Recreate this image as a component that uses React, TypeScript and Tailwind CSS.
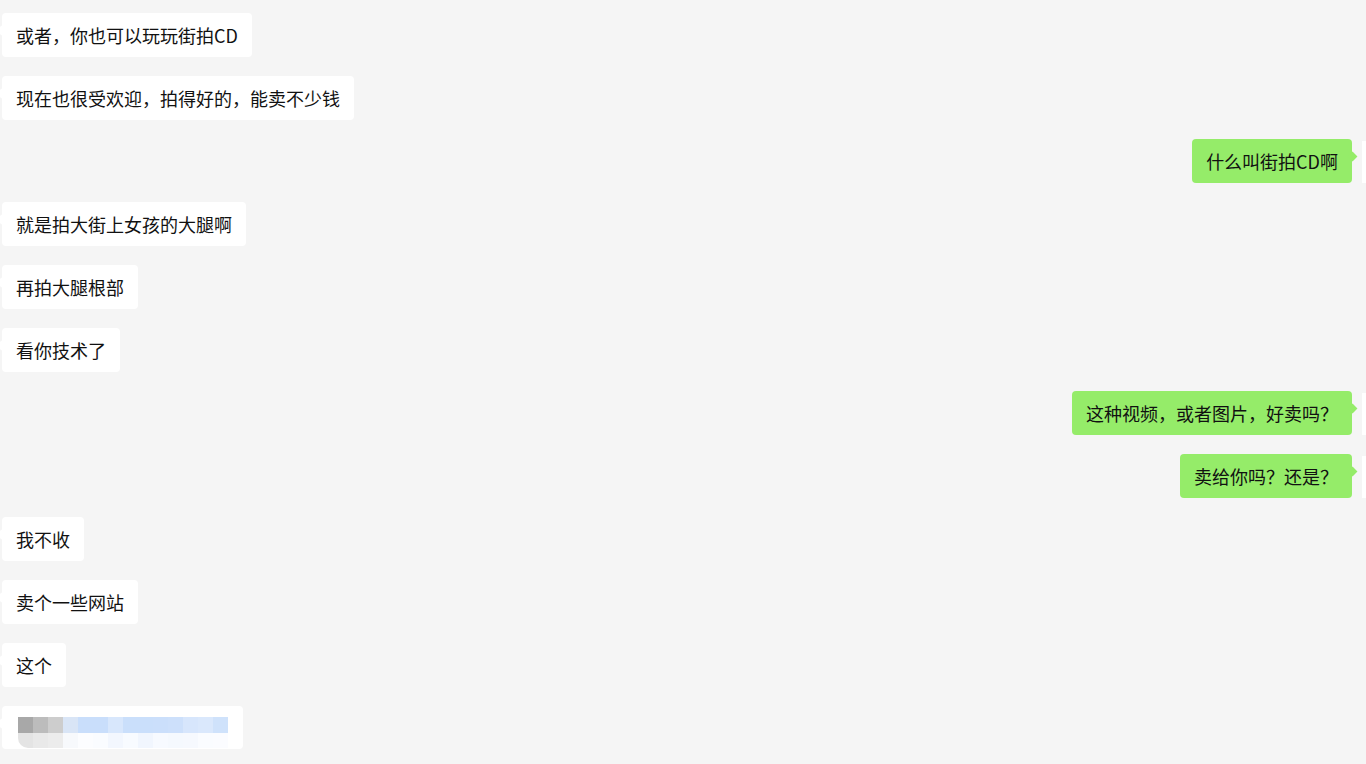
type Msg = { side: "left" | "right"; text: string };

const messages: Msg[] = [
  { side: "left", text: "或者，你也可以玩玩街拍CD" },
  { side: "left", text: "现在也很受欢迎，拍得好的，能卖不少钱" },
  { side: "right", text: "什么叫街拍CD啊" },
  { side: "left", text: "就是拍大街上女孩的大腿啊" },
  { side: "left", text: "再拍大腿根部" },
  { side: "left", text: "看你技术了" },
  { side: "right", text: "这种视频，或者图片，好卖吗？" },
  { side: "right", text: "卖给你吗？还是？" },
  { side: "left", text: "我不收" },
  { side: "left", text: "卖个一些网站" },
  { side: "left", text: "这个" },
];

// pixelated (blurred) last message
const mosaicTop = [
  "#a8a8a8", "#bcbcbc", "#cdcdcd", "#d9e5f6", "#c9defb", "#c9defb", "#d8e7fc",
  "#cadffb", "#cadffb", "#cbdffb", "#cde0fb", "#d7e6fc", "#dae8fc", "#cfe2fb",
];
const mosaicBottom = [
  "#e4e4e4", "#e9e9e9", "#ececec", "#f7f9fc", "#fcfdff", "#fafcff", "#f3f7fe",
  "#f8fbff", "#f1f6fe", "#f7faff", "#f5f9fe", "#f6f9fe", "#fafcff", "#fbfcff",
];

function LeftBubble({ children }: { children: React.ReactNode }) {
  return (
    <div className="flex pl-[2px]">
      <div className="relative rounded-[4px] bg-white px-[14px] py-[10px] text-[18px] leading-[24px] text-[#111111]">
        <span className="absolute left-[-4px] top-[14px] h-[7px] w-[7px] rotate-45 bg-white" />
        {children}
      </div>
    </div>
  );
}

function RightBubble({ children }: { children: React.ReactNode }) {
  return (
    <div className="flex items-start justify-end gap-[10px]">
      <div className="relative rounded-[4px] bg-[#95ec69] px-[14px] py-[10px] text-[18px] leading-[24px] text-[#111111]">
        <span className="absolute right-[-4px] top-[14px] h-[7px] w-[7px] rotate-45 bg-[#95ec69]" />
        {children}
      </div>
      <div className="mt-[2px] h-[42px] w-[4px] bg-white" />
    </div>
  );
}

export default function App() {
  return (
    <div
      className="h-[764px] w-full overflow-hidden bg-[#f5f5f5] pt-[13px]"
      style={{ fontFamily: '"Noto Sans CJK SC", "Noto Sans", sans-serif' }}
    >
      <div className="flex flex-col gap-[19px]">
        {messages.map((m, i) =>
          m.side === "left" ? (
            <LeftBubble key={i}>{m.text}</LeftBubble>
          ) : (
            <RightBubble key={i}>{m.text}</RightBubble>
          )
        )}
        <div className="flex pl-[2px]">
          <div className="relative rounded-[4px] bg-white pb-[1px] pl-[16px] pr-[15px] pt-[11px]">
            <span className="absolute left-[-4px] top-[14px] h-[7px] w-[7px] rotate-45 bg-white" />
            <div className="flex">
              {mosaicTop.map((c, i) => (
                <div key={i} className="h-[16px] w-[15px]" style={{ backgroundColor: c }} />
              ))}
            </div>
            <div className="flex">
              {mosaicBottom.map((c, i) => (
                <div
                  key={i}
                  className={i === 0 ? "h-[15px] w-[15px] rounded-bl-[10px]" : "h-[15px] w-[15px]"}
                  style={{ backgroundColor: c }}
                />
              ))}
            </div>
          </div>
        </div>
      </div>
    </div>
  );
}
